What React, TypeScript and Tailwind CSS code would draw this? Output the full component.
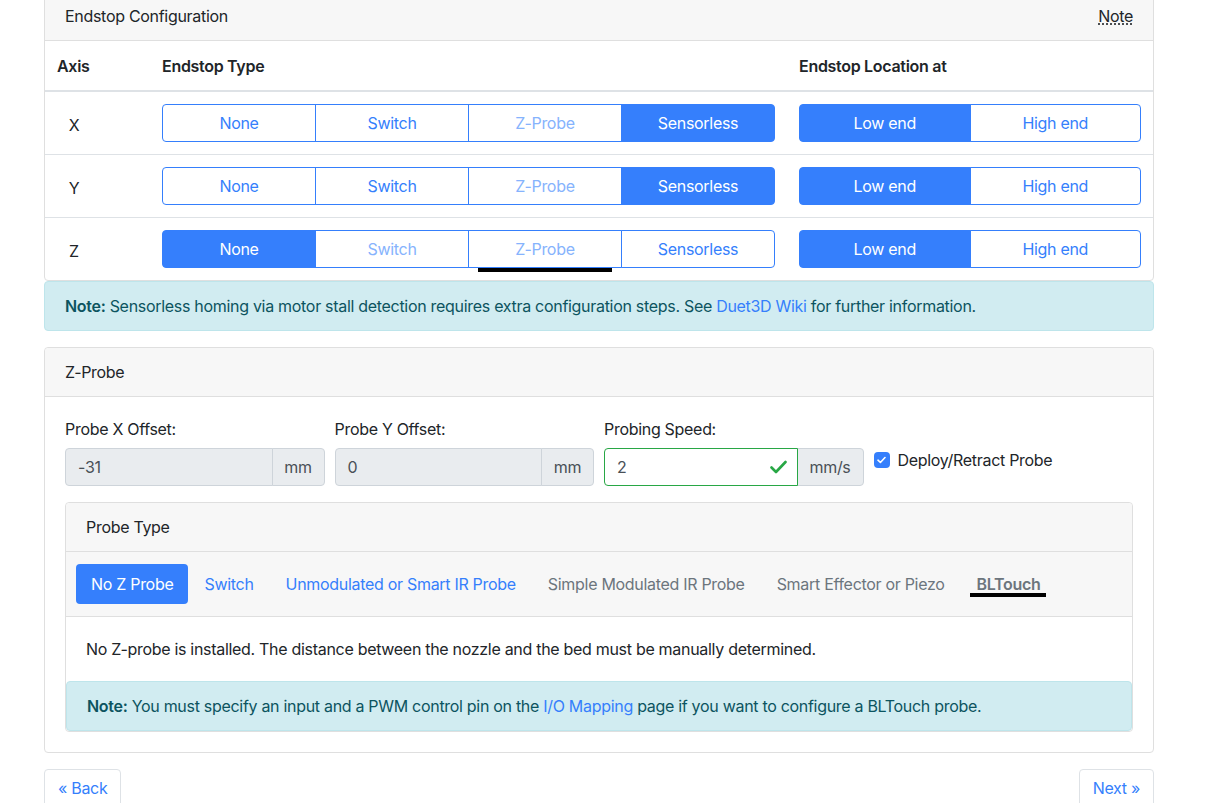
import React from 'react';

type BtnState = 'active' | 'outline' | 'disabled';

interface GroupItem {
  label: string;
  state: BtnState;
  marked?: boolean;
}

const font = { fontFamily: 'Inter, "Liberation Sans", Arial, sans-serif' };

const ButtonGroup = ({ items, width }: { items: GroupItem[]; width: string }) => {
  return (
    <div className={`flex h-[38px] ${width}`}>
      {items.map((item, i) => {
        let cls = 'relative flex-1 flex items-center justify-center border border-[#357ffc] text-base leading-6';
        if (i > 0) cls += ' -ml-px';
        if (i === 0) cls += ' rounded-l';
        if (i === items.length - 1) cls += ' rounded-r';
        if (item.state === 'active') cls += ' bg-[#357ffc] text-white z-10';
        else if (item.state === 'disabled') cls += ' bg-white text-[#86b3fd] border-[#86b3fd]';
        else cls += ' bg-white text-[#357ffc]';
        return (
          <div key={item.label} className={cls}>
            {item.label}
            {item.marked && (
              <span className="absolute left-1/2 -translate-x-1/2 top-full mt-[1px] h-[4px] w-[134px] bg-black" />
            )}
          </div>
        );
      })}
    </div>
  );
};

const rows: { axis: string; types: GroupItem[]; low: boolean }[] = [
  {
    axis: 'X',
    types: [
      { label: 'None', state: 'outline' },
      { label: 'Switch', state: 'outline' },
      { label: 'Z-Probe', state: 'disabled' },
      { label: 'Sensorless', state: 'active' },
    ],
    low: true,
  },
  {
    axis: 'Y',
    types: [
      { label: 'None', state: 'outline' },
      { label: 'Switch', state: 'outline' },
      { label: 'Z-Probe', state: 'disabled' },
      { label: 'Sensorless', state: 'active' },
    ],
    low: true,
  },
  {
    axis: 'Z',
    types: [
      { label: 'None', state: 'active' },
      { label: 'Switch', state: 'disabled' },
      { label: 'Z-Probe', state: 'disabled', marked: true },
      { label: 'Sensorless', state: 'outline' },
    ],
    low: true,
  },
];

const ReadonlyInput = ({ value, unit, unitWidth }: { value: string; unit: string; unitWidth: string }) => (
  <div className="flex h-[38px]">
    <div className="flex-1 flex items-center px-3 bg-[#e9ecef] border border-[#ced4da] rounded-l text-[#495057]">
      {value}
    </div>
    <div className={`flex items-center justify-center -ml-px bg-[#e9ecef] border border-[#ced4da] rounded-r text-[#495057] ${unitWidth}`}>
      {unit}
    </div>
  </div>
);

const App = () => {
  return (
    <div className="min-h-screen bg-white text-[#212529] text-base leading-6 tracking-[-0.3px]" style={font}>
      <div className="w-[1110px] ml-[44px] -mt-[9px] pb-10">
        {/* Endstop configuration */}
        <div className="border border-[#dfdfdf] rounded">
          <div className="flex justify-between items-center px-5 py-3 bg-[#f7f7f7] border-b border-[#dfdfdf] rounded-t">
            <span>Endstop Configuration</span>
            <span className="underline decoration-dotted underline-offset-2">Note</span>
          </div>
          <div className="grid grid-cols-[105px_637px_1fr] border-b-2 border-[#dee2e6] font-semibold">
            <div className="px-3 pt-[13px] pb-3">Axis</div>
            <div className="px-3 pt-[13px] pb-3">Endstop Type</div>
            <div className="px-3 pt-[13px] pb-3">Endstop Location at</div>
          </div>
          {rows.map((row, idx) => (
            <div
              key={row.axis}
              className={`grid grid-cols-[105px_637px_1fr] items-center ${idx > 0 ? 'border-t border-[#dee2e6]' : ''}`}
            >
              <div className="px-3 pt-[14px] pb-[10px]">
                <span className="inline-block w-[34px] text-center">{row.axis}</span>
              </div>
              <div className="px-3 py-3">
                <ButtonGroup items={row.types} width="w-[613px]" />
              </div>
              <div className="px-3 py-3">
                <ButtonGroup
                  items={[
                    { label: 'Low end', state: row.low ? 'active' : 'outline' },
                    { label: 'High end', state: row.low ? 'outline' : 'active' },
                  ]}
                  width="w-[342px]"
                />
              </div>
            </div>
          ))}
        </div>
        <div className="px-5 py-3 bg-[#d1ecf1] border border-[#bee5eb] rounded text-[#0c5460]">
          <strong className="font-semibold">Note:</strong> Sensorless homing via motor stall detection requires extra configuration steps. See{' '}
          <a className="text-[#357ffc]">Duet3D Wiki</a> for further information.
        </div>

        {/* Z-Probe */}
        <div className="mt-4 border border-[#dfdfdf] rounded">
          <div className="px-5 py-3 bg-[#f7f7f7] border-b border-[#dfdfdf] rounded-t">Z-Probe</div>
          <div className="p-5">
            <div className="grid grid-cols-4 -mx-[5px]">
              <div className="px-[5px]">
                <div className="mb-[7px]">Probe X Offset:</div>
                <ReadonlyInput value="-31" unit="mm" unitWidth="w-[53px]" />
              </div>
              <div className="px-[5px]">
                <div className="mb-[7px]">Probe Y Offset:</div>
                <ReadonlyInput value="0" unit="mm" unitWidth="w-[53px]" />
              </div>
              <div className="px-[5px]">
                <div className="mb-[7px]">Probing Speed:</div>
                <div className="flex h-[38px]">
                  <div className="flex-1 flex items-center justify-between pl-3 pr-[10px] bg-white border border-[#28a745] rounded-l text-[#495057] z-10">
                    <span>2</span>
                    <svg width="17" height="14" viewBox="0 0 17 14" fill="none">
                      <path d="M1.5 7.5 L6 12 L15.5 2" stroke="#28a745" strokeWidth="2.6" strokeLinecap="round" strokeLinejoin="round" />
                    </svg>
                  </div>
                  <div className="flex items-center justify-center w-[67px] -ml-px bg-[#e9ecef] border border-[#ced4da] rounded-r text-[#495057]">
                    mm/s
                  </div>
                </div>
              </div>
              <div className="px-[5px] pt-[31px]">
                <div className="flex items-center gap-2">
                  <span className="w-4 h-4 rounded bg-[#357ffc] flex items-center justify-center">
                    <svg width="9" height="8" viewBox="0 0 9 8" fill="none">
                      <path d="M1 4.2 L3.4 6.5 L8 1.5" stroke="white" strokeWidth="1.6" strokeLinecap="round" strokeLinejoin="round" />
                    </svg>
                  </span>
                  <span>Deploy/Retract Probe</span>
                </div>
              </div>
            </div>

            {/* Probe type */}
            <div className="mt-4 border border-[#dfdfdf] rounded">
              <div className="px-5 py-3 bg-[#f7f7f7] border-b border-[#dfdfdf] rounded-t">Probe Type</div>
              <div className="flex items-center px-[10px] py-3 bg-[#f7f7f7] border-b border-[#dfdfdf]">
                <span className="px-[15px] py-2 rounded bg-[#357ffc] text-white">No Z Probe</span>
                <span className="px-4 py-2 text-[#357ffc]">Switch</span>
                <span className="px-4 py-2 text-[#357ffc]">Unmodulated or Smart IR Probe</span>
                <span className="px-4 py-2 text-[#6c757d]">Simple Modulated IR Probe</span>
                <span className="px-4 py-2 text-[#6c757d]">Smart Effector or Piezo</span>
                <span className="relative px-4 py-2 text-[#6c757d] font-semibold">
                  BLTouch
                  <span className="absolute left-[9px] top-[29px] h-[4px] w-[76px] bg-black" />
                </span>
              </div>
              <div className="p-5">
                No Z-probe is installed. The distance between the nozzle and the bed must be manually determined.
              </div>
              <div className="px-5 py-3 bg-[#d1ecf1] border border-[#bee5eb] rounded text-[#0c5460]">
                <strong className="font-semibold">Note:</strong> You must specify an input and a PWM control pin on the{' '}
                <a className="text-[#357ffc]">I/O Mapping</a> page if you want to configure a BLTouch probe.
              </div>
            </div>
          </div>
        </div>

        {/* Navigation */}
        <div className="flex justify-between mt-4">
          <button className="h-[38px] px-[13px] border border-[#dee2e6] rounded bg-white text-[#357ffc]">« Back</button>
          <button className="h-[38px] px-[13px] border border-[#dee2e6] rounded bg-white text-[#357ffc]">Next »</button>
        </div>
      </div>
    </div>
  );
};

export default App;
